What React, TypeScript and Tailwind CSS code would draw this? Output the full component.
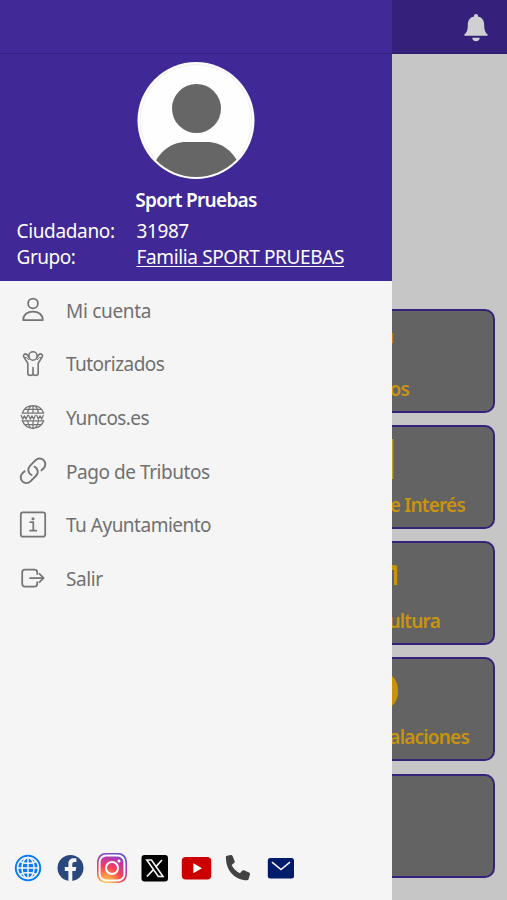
import type { ReactNode } from 'react';

function MenuIcon({ children }: { children: ReactNode }) {
  return (
    <svg
      className="h-[30px] w-[30px] shrink-0"
      viewBox="0 0 30 30"
      fill="none"
      stroke="#757575"
      strokeWidth="1.75"
      strokeLinecap="round"
      strokeLinejoin="round"
    >
      {children}
    </svg>
  );
}

const menu: { label: string; tracking: string; icon: ReactNode }[] = [
  {
    label: 'Mi cuenta',
    tracking: 'tracking-[-0.3px]',
    icon: (
      <>
        <circle cx="15" cy="8.4" r="4.9" />
        <path d="M5.2 25c0-5.3 4.3-8.5 9.8-8.5s9.8 3.2 9.8 8.5z" />
      </>
    ),
  },
  {
    label: 'Tutorizados',
    tracking: 'tracking-[-0.55px]',
    icon: (
      <g strokeWidth="1.6">
        <circle cx="15" cy="7" r="4.2" />
        <path d="M10.9 7.9 8.9 5.6C7.2 3.9 4.5 5.8 5.8 7.9l4 6.3v10.4c0 2.6 5.2 2.6 5.2 0v-6v6c0 2.6 5.2 2.6 5.2 0V14.200l4-6.300c1.300-2.100-1.400-4-3.100-2.300l-2 2.300" />
        <path d="M6.500 8.500h2.200l1.900 2.200M23.500 8.500h-2.200l-1.900 2.200" strokeWidth="1" />
      </g>
    ),
  },
  {
    label: 'Yuncos.es',
    tracking: 'tracking-[-0.6px]',
    icon: (
      <g strokeWidth="1.25">
        <path d="M4.200 11.200a11.500 11.500 0 0 1 21.600 0M4.200 18.500a11.500 11.500 0 0 0 21.600 0M9.500 11.200C10.300 6.500 12.500 3.500 15 3.500s4.700 3 5.500 7.700M9.500 18.500c.8 4.700 3 8 5.500 8s4.700-3.300 5.500-8M15 3.500v7.700M15 18.500v8M6.200 7.400h17.600M4.200 11.200h21.600M4.200 18.800h21.600M6.200 22.500h17.600" />
        <path d="m3.200 13.400 1.500 3.700 1.700-3.200 1.700 3.200 1.500-3.700m1.200 0 1.500 3.700 1.700-3.200 1.700 3.200 1.500-3.700m1.600 0 1.500 3.700 1.700-3.200 1.700 3.200 1.500-3.700" />
      </g>
    ),
  },
  {
    label: 'Pago de Tributos',
    tracking: 'tracking-[-0.45px]',
    icon: (
      <g transform="translate(-0.1 -0.3) scale(1.26)" strokeWidth="1.5">
        <path d="M13.190 8.688a4.500 4.500 0 0 1 1.242 7.244l-4.500 4.500a4.500 4.500 0 0 1-6.364-6.364l1.757-1.757m13.350-.622 1.757-1.757a4.500 4.500 0 0 0-6.364-6.364l-4.500 4.500a4.500 4.500 0 0 0 1.242 7.244" />
      </g>
    ),
  },
  {
    label: 'Tu Ayuntamiento',
    tracking: 'tracking-[-0.5px]',
    icon: (
      <>
        <rect x="2.800" y="2.300" width="24.400" height="24.400" rx="2.200" />
        <path d="M12.300 12.200h3v8.200M12 20.500h6.400" />
        <circle cx="15" cy="8.700" r=".7" fill="#757575" />
      </>
    ),
  },
  {
    label: 'Salir',
    tracking: 'tracking-[-0.4px]',
    icon: (
      <path d="M19.200 11V9.300c0-2-1-2.800-2.800-2.800H7c-1.800 0-2.800 1-2.800 2.800v11.400c0 1.800 1 2.800 2.800 2.800h9.400c1.800 0 2.800-1 2.800-2.800V19M12 15h13.600M21.500 10.800l4.200 4.200-4.200 4.200" />
    ),
  },
];

function Drawer() {
  return (
    <aside className="flex h-full w-[392px] shrink-0 flex-col bg-[#f5f5f5]">
      <div className="h-[54px] border-b border-[#34217f] bg-[#412a98]" />
      <div className="flex h-[227px] flex-col bg-[#402896] pt-[8px] text-white">
        <svg className="mx-auto h-[118px] w-[118px]" viewBox="0 0 118 118">
          <defs>
            <clipPath id="avatar">
              <circle cx="59" cy="59" r="56" />
            </clipPath>
          </defs>
          <circle cx="59" cy="58.500" r="58.500" fill="#fff" />
          <circle cx="59" cy="58.500" r="56" fill="#fefefe" stroke="#efeff1" />
          <circle cx="59.500" cy="46.500" r="24.500" fill="#666" />
          <path d="M17 103c5-13 17-23 32-23h21c15 0 27 10 32 23v20H17z" fill="#666" clipPath="url(#avatar)" />
        </svg>
        <div className="mt-[7px] text-center text-[19px] font-semibold leading-[26px] tracking-[-0.7px]">Sport Pruebas</div>
        <div className="mt-[5px] grid grid-cols-[120px_1fr] pl-[16.500px] text-[19px] leading-[26px]">
          <span className="tracking-[-0.35px]">Ciudadano:</span>
          <span className="tracking-[-0.4px]">31987</span>
          <span className="tracking-[-0.45px]">Grupo:</span>
          <span className="tracking-[-0.37px] underline decoration-1 underline-offset-2">Familia SPORT PRUEBAS</span>
        </div>
      </div>
      <nav className="flex flex-col pt-[2px] text-[19px] text-[#707070]">
        {menu.map((item) => (
          <div key={item.label} className="flex h-[53.7px] items-center gap-[18px] pl-[18px]">
            <MenuIcon>{item.icon}</MenuIcon>
            <span className={`${item.tracking} pt-[2px]`}>{item.label}</span>
          </div>
        ))}
      </nav>
      <SocialBar />
    </aside>
  );
}

function SocialBar() {
  return (
    <div className="mt-auto mb-[16px] flex h-8 items-center gap-[10px] pl-3">
      <svg className="h-8 w-8" viewBox="0 0 32 32" fill="none" stroke="#f5f5f5" strokeWidth="1.5">
        <circle cx="16" cy="16" r="13.2" fill="#087bf5" stroke="none" />
        <circle cx="16" cy="16" r="10.5" />
        <ellipse cx="16" cy="16" rx="6" ry="10.5" />
        <path d="M16 5.5v21M5.5 16h21M8 9.5q8 4 16 0M8 22.5q8-4 16 0" />
      </svg>
      <svg className="h-8 w-8" viewBox="0 0 32 32">
        <circle cx="16.5" cy="16" r="13" fill="#29487d" />
        <path d="M14.4 29V19h-3.6v-4h3.6v-3c0-3.8 2.2-5.7 5.5-5.7 1.3 0 2.5.2 2.5.2V10h-1.8c-1.7 0-2.3 1-2.3 2.3V15h4l-.7 4h-3.3v10z" fill="#f5f5f5" />
      </svg>
      <svg className="h-8 w-8" viewBox="0 0 32 32">
        <defs>
          <radialGradient id="instagram" cx="28%" cy="104%" r="118%">
            <stop offset="0" stopColor="#ffd45e" />
            <stop offset=".24" stopColor="#ff9a48" />
            <stop offset=".5" stopColor="#f83e55" />
            <stop offset=".75" stopColor="#b83aae" />
            <stop offset="1" stopColor="#4a54df" />
          </radialGradient>
        </defs>
        <rect x="1" y="1" width="30" height="30" rx="8.5" fill="url(#instagram)" />
        <rect x="3.6" y="3.6" width="24.8" height="24.8" rx="6.5" fill="none" stroke="#fff" strokeWidth="2" />
        <circle cx="16" cy="16" r="6" fill="none" stroke="#fff" strokeWidth="2" />
        <circle cx="23" cy="9" r="1.5" fill="#fff" />
      </svg>
      <svg className="h-8 w-8" viewBox="0 0 32 32">
        <rect x="3.5" y="3" width="26.5" height="26.5" rx="3" fill="#000" />
        <path d="M8.8 8h4.7L25 24.5h-4.7z" fill="none" stroke="#f5f5f5" strokeWidth="1.6" />
        <path d="m24 8-6.4 7.1m-2.4 2.7-6.3 6.7" stroke="#f5f5f5" strokeWidth="1.7" />
      </svg>
      <svg className="h-8 w-8" viewBox="0 0 32 32">
        <rect x="1.8" y="5" width="29.4" height="22.5" rx="4" fill="#cc0000" />
        <path d="m13.3 11.2 8.7 5-8.7 5z" fill="#fff" />
      </svg>
      <svg className="h-8 w-8" viewBox="0 0 32 32">
        <g transform="translate(0.9 0)">
          <path d="M4.1 3.8 7.9 3c.8-.2 1.4.2 1.7.9l2.1 5.1c.3.7.1 1.4-.5 1.9l-2.500 2c1.800 3.700 4.500 6.500 8.400 8.300l2-2.400c.5-.6 1.300-.8 2-.5l5 2.100c.8.4 1.200 1 1 1.800l-1.400 4.900c-.2.8-.8 1.200-1.600 1.200C12 27.900 3.100 18.800 3 5.400c0-.8.3-1.400 1.100-1.600z" fill="#424242" />
        </g>
      </svg>
      <svg className="h-8 w-8" viewBox="0 0 32 32">
        <rect x="3.8" y="6" width="26.2" height="20.5" rx="2.5" fill="#001b69" />
        <path d="m8 10.2 9 7.3 9-7.3" fill="none" stroke="#f5f5f5" strokeWidth="1.6" />
      </svg>
    </div>
  );
}

const cards: { text: string; pad: string; mark: ReactNode }[] = [
  { text: 'os', pad: 'pr-[84px]', mark: <path d="M0 22h1.2v10H0z" fill="#b87a24" /> },
  { text: 'e Interés', pad: 'pr-[28px]', mark: <path d="M0 12h1.3v40H0z" fill="#b4a02c" /> },
  { text: 'ultura', pad: 'pr-[53px]', mark: <path d="M0 22h3q2.2 0 2.2 2.5V42H2V27H0z" fill="#c9930e" /> },
  { text: 'alaciones', pad: 'pr-[24px]', mark: <path d="M0 17q6 5 6 15T0 47z" fill="#c9930e" /> },
  { text: '', pad: 'pr-0', mark: null },
];

function Background() {
  return (
    <main className="flex h-full min-w-0 flex-1 flex-col overflow-hidden bg-[#c6c6c6]">
      <header className="flex h-[54px] shrink-0 items-center justify-end border-b border-[#2c1a6b] bg-[#35217b] pr-[18px]">
        <svg className="mt-[2px] h-[30px] w-[26px]" viewBox="0 0 26 30" fill="#d0d0d2">
          <path d="M13 1c1.2 0 2 .8 2 1.800v.7c4.300.8 6.200 4.200 6.200 8.800 0 5.300 1.300 7.100 3 8.800.8.8.7 1.700-.4 1.700H2.200c-1.100 0-1.200-.9-.4-1.700 1.700-1.700 3-3.500 3-8.800 0-4.600 1.900-8 6.200-8.800v-.7C11 1.800 11.800 1 13 1zM9.300 24.800h7.400c0 2.100-1.500 3.500-3.700 3.500s-3.700-1.400-3.700-3.500z" />
        </svg>
      </header>
      <div className="mt-[254.6px] flex flex-col gap-[12.3px] pr-3">
        {cards.map((card, i) => (
          <section key={i} className="flex h-[104px] flex-col rounded-r-[10px] border-2 border-l-0 border-[#36217b] bg-[#636363]">
            <svg className="h-[65px] w-[10px] shrink-0" viewBox="0 0 10 65">
              {card.mark}
            </svg>
            <div className={`${card.pad} flex justify-end whitespace-nowrap text-[19px] font-semibold leading-[26px] tracking-[-0.8px] text-[#c9930e]`}>
              <span>{card.text}</span>
            </div>
          </section>
        ))}
      </div>
    </main>
  );
}

export default function App() {
  return (
    <div className="flex h-[900px] w-[507px] overflow-hidden font-['Noto_Sans','Open_Sans',sans-serif]">
      <Drawer />
      <Background />
    </div>
  );
}
